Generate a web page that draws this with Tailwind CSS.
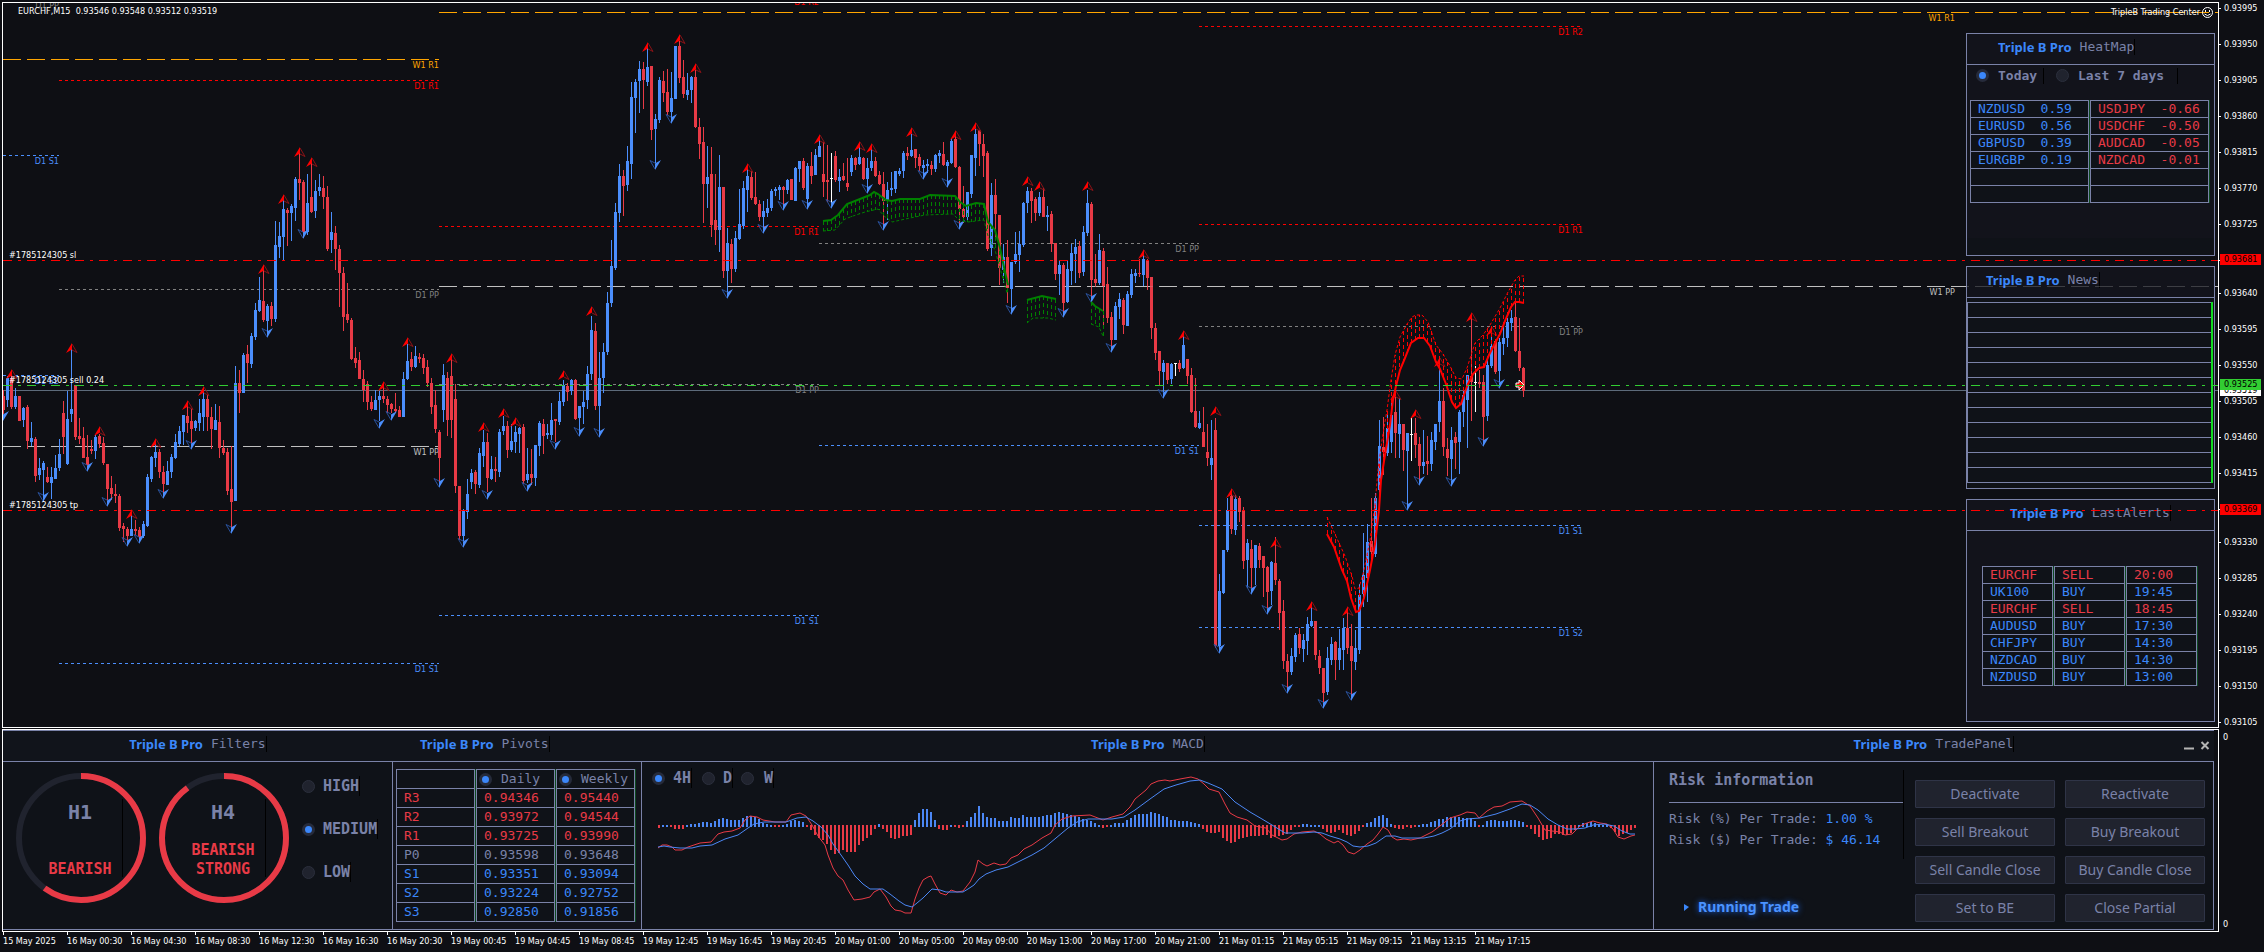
<!DOCTYPE html>
<html lang="en">
<head>
    <meta charset="UTF-8">
    <meta name="viewport" content="width=device-width, initial-scale=1.0">
    <title>EURCHF,M15 | Triple B Pro</title>
    <script src="https://cdn.jsdelivr.net/npm/@tailwindcss/browser@4"></script>
</head>
<body class="bg-[#0e0f14] min-h-screen flex flex-col overflow-x-hidden text-white font-['DejaVu_Sans_Condensed','DejaVu_Sans',sans-serif]">

    <!-- Price chart -->
    <div class="flex flex-1 pt-[2px] pl-[2px]">
        <main class="relative flex-1 min-h-[726px] border border-white overflow-hidden">
            <svg class="absolute inset-0 w-full h-full text-[9px]">
                <g transform="translate(-3 -3)">
                    <g id="pivot-lines" shape-rendering="crispEdges"></g>
                    <path d="M3 390.5H2218" stroke="#5d6b7b" shape-rendering="crispEdges"/>
                    <g id="candles" shape-rendering="crispEdges"></g>
                    <g id="arrows"></g>
                    <g id="ribbons"></g>
                    <path d="M1516 383h3v-3l5 5-5 5v-3h-3z" fill="#f00" stroke="#fff"/>
                    <g fill="#fff">
                        <text x="18" y="14" xml:space="preserve">EURCHF,M15  0.93546 0.93548 0.93512 0.93519</text>
                        <text x="9" y="258">#1785124305 sl</text>
                        <text x="9" y="383">#1785124305 sell 0.24</text>
                        <text x="9" y="508">#1785124305 tp</text>
                        <text x="2200" y="15" text-anchor="end">TripleB Trading Center</text>
                    </g>
                    <g fill="none" stroke="#fff">
                        <circle cx="2207.500" cy="12.500" r="5"/>
                        <path d="M2205.500 10v2M2209.500 10v2M2204.500 14q3 3 6 0"/>
                    </g>
                </g>
            </svg>

            <aside class="absolute top-[30px] right-[3px] w-[249px] flex flex-col gap-[10px] font-['DejaVu_Sans_Mono',monospace] text-[13px] leading-4 text-[#7a82a8]">
                <!-- HeatMap -->
                <section class="h-[223px] border border-[#7a82a8] bg-[#0f1218]">
                    <h2 class="h-[31px] pl-[31px] pb-1 flex items-center gap-2 border-b border-[#7a82a8] bg-[#12131b]">
                        <span class="font-['Noto_Sans',sans-serif] font-bold text-[#3b87fa]">Triple B Pro</span>
                        <span class="border-r border-black">HeatMap</span>
                    </h2>
                    <div class="h-[173px] bg-[#12131b]">
                        <div class="flex items-center h-[21px] pl-[9px] font-bold">
                            <input type="radio" name="range" id="today" checked class="appearance-none w-[13px] h-[13px] rounded-full bg-[#20232e] border border-[#2b2f3d] checked:bg-[#3b87fa] checked:border-[3px] checked:border-[#262b3b]">
                            <label for="today" class="w-[46px] ml-[9px] border-r border-black">Today</label>
                            <input type="radio" name="range" id="week" class="appearance-none ml-[12px] w-[13px] h-[13px] rounded-full bg-[#20232e] border border-[#2b2f3d] checked:bg-[#3b87fa] checked:border-[3px] checked:border-[#262b3b]">
                            <label for="week" class="w-[100px] ml-[9px] border-r border-black">Last 7 days</label>
                        </div>
                        <table id="heatmap" class="ml-[2px] mt-[14px] border-separate border-spacing-x-px border-spacing-y-0"></table>
                    </div>
                </section>
                <!-- News -->
                <section class="h-[223px] border border-[#7a82a8] bg-[#0f1218]">
                    <h2 class="h-[31px] pl-[19px] pb-1 flex items-center gap-2 border-b border-[#7a82a8] bg-[#12131b]">
                        <span class="font-['Noto_Sans',sans-serif] font-bold text-[#3b87fa]">Triple B Pro</span>
                        <span class="border-r border-black">News</span>
                    </h2>
                    <table id="news" class="mt-1 w-[246px] border-collapse border border-[#7a82a8] border-r-2 border-r-[#12d922]"></table>
                </section>
                <!-- LastAlerts -->
                <section class="h-[223px] border border-[#7a82a8] bg-[#12131b]">
                    <h2 class="h-[31px] pb-1 flex items-center justify-center gap-2 border-b border-[#7a82a8]">
                        <span class="font-['Noto_Sans',sans-serif] font-bold text-[#3b87fa]">Triple B Pro</span>
                        <span class="border-r border-black">LastAlerts</span>
                    </h2>
                    <table id="alerts" class="ml-[14px] mt-[35px] border-separate border-spacing-x-px border-spacing-y-0"></table>
                </section>
            </aside>

            <!-- Order levels stay above the panels -->
            <svg class="absolute inset-0 w-full h-full pointer-events-none" shape-rendering="crispEdges">
                <g transform="translate(-3 -3)" stroke-dasharray="9 6 3 6">
                    <path d="M3 260.500H2218" stroke="#f00"/>
                    <path d="M3 385.500H2218" stroke="#32cd32"/>
                    <path d="M3 510.500H2218" stroke="#f00"/>
                    <path d="M439 286.500H2218" stroke="#c0c0c0" stroke-opacity="0.250" stroke-dasharray="18 6"/>
                </g>
            </svg>
        </main>
        <!-- Price scale -->
        <div class="relative w-[45px] text-[9px] leading-3">
            <div id="prices" class="flex flex-col"></div>
            <span class="absolute top-[383px] left-px w-[41px] h-[11px] pl-1 leading-[11px] bg-white text-black">0.93519</span>
            <span class="absolute top-[377px] left-px w-[41px] h-[11px] pl-1 leading-[11px] bg-[#32cd32] text-black">0.93525</span>
            <span class="absolute top-[252px] left-px w-[41px] h-[11px] pl-1 leading-[11px] bg-[#f00] text-black">0.93681</span>
            <span class="absolute top-[502px] left-px w-[41px] h-[11px] pl-1 leading-[11px] bg-[#f00] text-black">0.93369</span>
        </div>
    </div>

    <!-- Dashboard -->
    <div class="flex pt-px pl-[2px]">
        <div class="flex-1 border border-white pr-1 pb-px">
            <div class="grid grid-cols-[390px_249px_1fr_560px] border-y border-[#7a82a8] bg-[#0f1218] font-['DejaVu_Sans_Mono',monospace] text-[13px] leading-4 text-[#7a82a8]">
                <!-- Filters -->
                <section class="flex flex-col">
                    <h2 class="h-[31px] pb-1 flex items-center justify-center gap-2 border-b border-[#7a82a8] bg-[#11141b]">
                        <span class="font-['Noto_Sans',sans-serif] font-bold text-[#3b87fa]">Triple B Pro</span>
                        <span class="border-r border-black">Filters</span>
                    </h2>
                    <div class="h-[167px] flex border-r border-[#7a82a8] pl-3 pt-[10px] font-bold">
                        <svg class="w-[276px] h-[132px]" text-anchor="middle">
                            <g fill="none" stroke-width="6">
                                <circle cx="66" cy="66" r="62" stroke="#20232e"/>
                                <circle cx="66" cy="66" r="62" stroke="#e83a46" pathLength="100" stroke-dasharray="60 40" transform="rotate(-90 66 66)"/>
                                <circle cx="209" cy="66" r="62" stroke="#20232e"/>
                                <circle cx="209" cy="66" r="62" stroke="#e83a46" pathLength="100" stroke-dasharray="90 10" transform="rotate(-90 209 66)"/>
                            </g>
                            <path d="M107.500 27v78M250.500 27v78" stroke="#000"/>
                            <g class="text-[20px]" fill="#7a82a8">
                                <text x="65" y="47">H1</text>
                                <text x="208" y="47">H4</text>
                            </g>
                            <g class="text-[15px]" fill="#e83a46">
                                <text x="65" y="102">BEARISH</text>
                                <text x="208" y="83">BEARISH</text>
                                <text x="208" y="102">STRONG</text>
                            </g>
                        </svg>
                        <div class="flex flex-col gap-[23px] pt-1 pl-[11px] text-[15px] leading-5">
                            <div class="flex items-center gap-2">
                                <input type="radio" name="filter" id="high" class="appearance-none w-[13px] h-[13px] rounded-full bg-[#20232e] border border-[#2b2f3d] checked:bg-[#3b87fa] checked:border-[3px] checked:border-[#262b3b]">
                                <label for="high" class="border-r border-black">HIGH</label>
                            </div>
                            <div class="flex items-center gap-2">
                                <input type="radio" name="filter" id="medium" checked class="appearance-none w-[13px] h-[13px] rounded-full bg-[#20232e] border border-[#2b2f3d] checked:bg-[#3b87fa] checked:border-[3px] checked:border-[#262b3b]">
                                <label for="medium" class="border-r border-black">MEDIUM</label>
                            </div>
                            <div class="flex items-center gap-2">
                                <input type="radio" name="filter" id="low" class="appearance-none w-[13px] h-[13px] rounded-full bg-[#20232e] border border-[#2b2f3d] checked:bg-[#3b87fa] checked:border-[3px] checked:border-[#262b3b]">
                                <label for="low" class="border-r border-black">LOW</label>
                            </div>
                        </div>
                    </div>
                </section>
                <!-- Pivots -->
                <section class="flex flex-col">
                    <h2 class="h-[31px] pl-[27px] pb-1 flex items-center gap-2 border-b border-[#7a82a8] bg-[#11141b]">
                        <span class="font-['Noto_Sans',sans-serif] font-bold text-[#3b87fa]">Triple B Pro</span>
                        <span class="border-r border-black">Pivots</span>
                    </h2>
                    <div class="flex-1 border-r border-[#7a82a8] pl-[2px] pt-[7px] bg-[#12131b]">
                        <table id="pivots" class="border-separate border-spacing-x-px border-spacing-y-0"></table>
                    </div>
                </section>
                <!-- MACD -->
                <section class="flex flex-col">
                    <h2 class="h-[31px] pb-1 flex items-center justify-center gap-2 border-b border-[#7a82a8] bg-[#11141b]">
                        <span class="font-['Noto_Sans',sans-serif] font-bold text-[#3b87fa]">Triple B Pro</span>
                        <span class="border-r border-black">MACD</span>
                    </h2>
                    <div class="relative flex-1 border-r border-[#7a82a8] overflow-hidden">
                        <svg class="absolute inset-0 w-full h-full">
                            <g transform="translate(-642 -762)">
                                <g id="macd-bars" shape-rendering="crispEdges"></g>
                                <polyline fill="none" stroke="#e83a46" points="658,848 662,845 667,845 672,847 675,850 682,850 688,847 694,845 700,843 711,842 718,834 724,832 732,831 740,828 745,820 750,816 757,817 763,820 775,822 786,822 791,815 800,813 806,816 812,825 818,836 825,845 828,855 833,868 838,876 843,880 848,890 854,900 862,899 870,897 874,892 880,889 886,897 891,906 895,910 901,911 905,913 911,913 915,899 919,888 923,880 928,877 931,876 935,884 940,893 946,895 951,890 957,892 963,891 970,882 975,872 978,860 983,864 987,866 994,863 1000,865 1006,864 1011,858 1018,855 1024,849 1032,845 1042,838 1051,833 1055,825 1062,819 1072,816 1090,815 1103,820 1112,817 1123,814 1130,807 1135,799 1146,790 1151,784 1158,781 1165,780 1170,781 1180,779 1191,777 1198,779 1204,784 1209,789 1219,792 1225,804 1230,813 1237,817 1247,820 1255,826 1266,828 1272,835 1282,840 1287,839 1294,834 1302,832 1314,831 1320,834 1326,839 1334,843 1338,841 1343,845 1348,852 1354,854 1360,850 1367,844 1373,840 1378,834 1383,827 1388,830 1392,837 1397,840 1404,839 1411,840 1420,838 1432,832 1440,826 1450,818 1460,815 1467,812 1475,813 1479,818 1487,811 1494,807 1502,806 1510,802 1522,801 1530,806 1538,818 1545,830 1552,831 1560,832 1565,835 1572,834 1580,826 1587,823 1593,821 1600,823 1607,824 1613,829 1618,837 1624,839 1631,836 1635,835"/>
                                <polyline fill="none" stroke="#4b87f5" points="658,847 664,846 670,847 680,848 692,848 700,846 712,845 725,839 738,835 748,828 754,824 764,822 786,822 797,818 806,817 813,821 821,827 828,835 833,844 841,855 848,865 855,876 863,884 870,889 883,889 890,894 899,901 905,905 912,907 917,903 923,898 932,889 940,890 946,892 963,892 968,889 974,885 979,879 986,874 996,870 1008,867 1020,861 1032,855 1044,848 1056,838 1068,828 1077,822 1088,819 1112,819 1124,817 1135,810 1150,799 1164,789 1176,785 1190,781 1200,780 1208,783 1222,789 1235,802 1250,812 1262,819 1272,825 1285,833 1302,833 1314,832 1322,833 1330,836 1340,839 1347,842 1353,846 1360,847 1368,846 1376,843 1386,836 1395,836 1402,838 1424,838 1434,836 1442,833 1450,829 1460,821 1467,819 1480,818 1496,814 1510,809 1522,804 1530,805 1538,810 1548,819 1558,825 1567,829 1575,829 1585,828 1593,825 1604,824 1614,826 1622,831 1630,834 1635,834"/>
                            </g>
                        </svg>
                        <div class="relative flex items-center h-5 mt-[6px] ml-[10px] text-[15px] leading-5 font-bold">
                            <input type="radio" name="macd" id="tf-4h" checked class="appearance-none w-[13px] h-[13px] rounded-full bg-[#20232e] border border-[#2b2f3d] checked:bg-[#3b87fa] checked:border-[3px] checked:border-[#262b3b]">
                            <label for="tf-4h" class="ml-2 border-r border-black">4H</label>
                            <input type="radio" name="macd" id="tf-d" class="appearance-none ml-[10px] w-[13px] h-[13px] rounded-full bg-[#20232e] border border-[#2b2f3d] checked:bg-[#3b87fa] checked:border-[3px] checked:border-[#262b3b]">
                            <label for="tf-d" class="ml-2 border-r border-black">D</label>
                            <input type="radio" name="macd" id="tf-w" class="appearance-none ml-2 w-[13px] h-[13px] rounded-full bg-[#20232e] border border-[#2b2f3d] checked:bg-[#3b87fa] checked:border-[3px] checked:border-[#262b3b]">
                            <label for="tf-w" class="ml-[10px] border-r border-black">W</label>
                        </div>
                    </div>
                </section>
                <!-- TradePanel -->
                <section class="flex flex-col">
                    <div class="relative h-[31px] border-b border-[#7a82a8] bg-[#11141b]">
                        <h2 class="h-[30px] pb-1 flex items-center justify-center gap-2">
                            <span class="font-['Noto_Sans',sans-serif] font-bold text-[#3b87fa]">Triple B Pro</span>
                            <span class="border-r border-black">TradePanel</span>
                        </h2>
                        <div class="absolute top-[9px] right-1 flex gap-[6px]">
                            <button aria-label="Minimize"><svg class="w-[10px] h-[12px]"><path d="M0 8.500h10" stroke="#b4b4b4" stroke-width="2"/></svg></button>
                            <button aria-label="Close"><svg class="w-[10px] h-[12px]"><path d="M1.500 2l7 7M8.500 2l-7 7" stroke="#b4b4b4" stroke-width="2"/></svg></button>
                        </div>
                    </div>
                    <div class="flex-1 flex border-r border-[#7a82a8] pl-[15px] pr-2">
                        <div class="flex flex-col w-[246px] pt-2 pb-[8px]">
                            <div class="h-[89px] w-[235px] border-r border-black">
                                <h3 class="h-[33px] text-[15px] leading-5 font-bold border-b border-[#7a82a8]">Risk information</h3>
                                <p class="mt-2">Risk (%) Per Trade: <span class="text-[#3b87fa]">1.00 %</span></p>
                                <p class="mt-[5px]">Risk ($) Per Trade: <span class="text-[#3b87fa]">$ 46.14</span></p>
                            </div>
                            <button class="mt-auto mb-1 ml-[15px] flex items-center gap-[9px] font-['Noto_Sans',sans-serif] font-bold text-[14px] leading-5 text-[#4b93ff] [text-shadow:0_0_6px_#1c6dff]">
                                <svg class="w-[5px] h-[7px]"><path d="M0 0l5 3-5 4z" fill="#3b87fa"/></svg>Running Trade
                            </button>
                        </div>
                        <div id="actions" class="grid grid-cols-2 gap-[10px] flex-1 content-start pt-[18px] font-['Noto_Sans',sans-serif] text-[14px]"></div>
                    </div>
                </section>
            </div>
        </div>
        <div class="w-[45px] flex flex-col justify-between pl-1 py-[2px] text-[9px] leading-3">
            <span>0</span>
            <span>0</span>
        </div>
    </div>

    <!-- Time scale -->
    <div id="times" class="flex h-5 pl-[3px] text-[9px] leading-[17px] overflow-hidden"></div>

    <script>
        const BLUE = "#4b8efc", RED = "#e83a46";
        const $ = id => document.getElementById(id);

        // Pivot levels: x1, x2, y, label, color
        const levels = [
            [3, 439, 59, "W1 R1", "#ffa500"], [439, 2218, 12, "", "#ffa500"],
            [3, 439, 446, "W1 PP", "#c0c0c0"], [439, 2218, 286, "", "#c0c0c0"],
            [59, 439, 80, "D1 R1", "#f00"], [439, 819, 226, "D1 R1", "#f00"], [439, 819, -4, "D1 R2", "#f00"],
            [59, 439, 289, "D1 PP", "#808080"], [439, 819, 384, "D1 PP", "#808080"], [819, 1199, 243, "D1 PP", "#808080"], [3, 59, -1, "D1 PP", "#808080"],
            [3, 59, 155, "D1 S1", BLUE], [3, 59, 375, "D1 S2", BLUE], [59, 439, 663, "D1 S1", BLUE], [439, 819, 615, "D1 S1", BLUE], [819, 1199, 445, "D1 S1", BLUE],
            [1199, 1583, 26, "D1 R2", "#f00"], [1199, 1583, 224, "D1 R1", "#f00"], [1199, 1583, 326, "D1 PP", "#808080"],
            [1199, 1583, 525, "D1 S1", BLUE], [1199, 1583, 627, "D1 S2", BLUE]
        ];
        $("pivot-lines").innerHTML = levels.map(([x1, x2, y, label, color]) => {
            const weekly = color === "#ffa500" || color === "#c0c0c0";
            return `<path d="M${x1} ${y}.5H${x2}" stroke="${color}" stroke-dasharray="${weekly ? "18 6" : "3 3"}"/>
                <text x="${x2}" y="${y + 9}" text-anchor="end" fill="${color}">${label}</text>`;
        }).join("") +
            `<text x="1955" y="21" text-anchor="end" fill="#ffa500">W1 R1</text>
             <text x="1955" y="295" text-anchor="end" fill="#c0c0c0">W1 PP</text>`;

        // Candles: direction, high, body top, body bottom, low
        const candles = `r390 396 410 414,b376 378 400 407,r374 378 407 409,b388 396 407 409,r396 396 421 421,b407 408 420 427,r405 407 441 449,b422 438 442 446,r437 439 476 482,b458 468 475 480,
b461 463 470 502,r467 477 482 483,b467 477 483 499,b455 468 479 479,b439 454 468 471,r401 413 437 454,b391 419 464 465,b349 409 414 422,r385 385 437 440,r418 436 439 444,
r427 438 458 458,r435 457 465 465,r440 449 451 454,b435 437 451 459,r434 436 444 448,r437 443 463 465,r464 464 489 500,r476 488 494 500,r484 494 496 503,r494 496 528 531,
r523 526 529 542,r527 529 536 540,b515 529 536 536,r520 529 531 535,r527 530 537 540,b521 524 536 538,b474 477 526 527,b456 457 479 482,b444 452 458 467,r449 452 472 478,
r466 472 484 495,b461 471 485 485,b454 457 472 478,b434 442 458 459,b426 431 444 446,b415 415 432 445,r406 416 423 433,r409 421 429 443,b420 421 428 431,b399 413 423 431,
b391 399 417 431,r395 399 417 431,r407 417 429 449,b404 420 430 430,r406 422 448 458,r440 448 453 455,r448 452 491 495,r446 489 502 528,b366 383 501 501,r370 383 393 413,
b353 355 393 393,r345 354 363 383,b333 336 364 368,b303 310 337 340,b277 300 311 312,r269 301 320 322,b304 306 321 336,r302 306 319 326,b221 245 319 322,b222 236 247 258,
b200 209 237 260,r208 210 213 246,b204 206 213 241,b177 179 208 221,r153 179 183 200,r180 182 232 238,b174 203 232 235,r162 197 212 213,b180 191 211 218,b174 187 191 196,
r176 188 197 209,r186 197 249 251,b212 232 240 253,r226 233 249 270,r245 249 273 307,r267 273 317 331,r283 314 320 323,r318 320 359 360,r347 358 363 368,r352 360 379 379,
r370 379 390 402,r381 384 402 410,r396 402 409 411,b390 400 410 410,b391 396 400 421,r387 396 399 403,r396 399 405 413,r403 404 409 413,r393 409 411 413,r406 410 417 417,
b372 379 417 417,b344 361 379 380,r352 359 367 371,b346 356 367 368,r353 357 359 363,r354 358 368 374,r360 367 383 387,r378 383 407 414,r390 405 429 433,r430 432 458 484,
b364 375 410 422,r372 378 420 436,r359 376 420 438,r384 399 486 493,r486 486 536 540,b509 510 536 541,b479 494 512 519,b469 473 482 489,r470 472 484 494,b448 453 485 488,
b430 442 456 467,r433 442 478 492,b456 469 479 480,r457 469 471 482,b429 432 472 477,b416 426 431 435,r421 426 450 458,b424 441 450 452,b426 432 442 453,b427 428 434 453,
r424 427 481 484,b448 474 480 483,r449 474 478 485,b445 445 478 486,b421 423 446 456,r419 424 436 454,b424 433 435 439,b403 420 435 440,r419 419 421 442,b392 401 422 425,
b380 385 402 406,r383 386 392 401,b379 380 391 395,r379 380 419 420,b406 406 418 431,b391 402 407 424,b366 374 400 409,b316 330 374 380,r323 331 406 410,b352 378 406 436,
b343 352 378 393,b292 303 352 355,b240 266 303 307,b203 212 268 270,b164 176 213 222,r170 176 186 216,b146 161 185 191,b82 97 164 179,b79 82 98 133,b61 69 81 113,
r62 69 80 109,b48 67 82 86,r66 66 130 140,b114 119 129 163,b77 80 120 123,r71 81 93 102,r69 92 112 115,b72 98 112 118,b46 46 99 99,r41 46 78 83,
r60 77 94 98,b73 90 95 100,b76 77 90 103,r70 77 127 128,r118 127 144 159,r127 142 184 223,b146 177 184 208,r147 174 225 237,r174 220 230 245,b155 187 230 252,
r187 187 271 278,b228 243 271 292,r239 244 269 283,b231 238 269 272,b189 224 239 240,b181 188 226 229,b168 176 190 212,r171 177 198 200,r172 197 204 205,r200 204 217 221,
b201 211 217 228,b199 208 213 217,b189 191 208 211,b187 189 191 196,b185 187 190 200,r186 187 190 205,b179 180 190 194,r179 179 200 200,b167 168 201 201,b161 161 169 182,
r158 161 188 190,b163 166 199 204,r152 166 176 184,b149 155 175 175,b140 146 157 157,r142 174 182 197,r145 180 182 202,w153 178 179 204,r151 156 180 182,b169 177 181 192,
r163 176 180 181,r158 183 187 191,b155 158 172 176,r157 158 165 170,b147 157 164 165,r157 158 179 180,b158 168 179 191,b149 161 168 171,r157 161 176 177,r171 175 184 185,
r172 184 201 225,b182 190 201 220,b172 188 190 196,b171 171 189 193,b168 171 174 176,b151 153 171 178,r147 153 156 160,b134 150 156 157,r149 149 158 168,r154 157 166 171,
b160 165 168 174,b159 164 166 173,r161 165 169 175,b154 155 169 172,b150 153 156 163,r142 154 165 166,b160 162 166 187,b138 141 163 164,r136 139 167 168,r166 167 209 224,
r186 209 217 223,b192 192 217 220,b155 155 194 198,b129 134 158 176,r130 130 144 166,r134 144 156 177,r151 153 249 251,b183 195 248 256,r179 195 214 240,r215 215 268 285,
b244 257 270 283,r240 257 288 303,b262 262 289 311,b232 254 262 264,b231 244 255 272,b202 203 245 247,b187 191 203 213,r188 191 201 223,r197 199 213 221,b192 197 213 216,
r188 197 217 217,b206 215 217 231,r211 214 244 252,r243 243 274 280,b261 265 274 295,r263 265 303 313,b260 269 302 303,b244 253 271 285,b239 247 254 283,r241 246 273 278,
b226 232 272 276,b190 203 233 236,r202 204 280 300,r254 279 283 287,b234 250 283 285,r248 251 286 326,r267 284 318 323,r312 317 340 348,b302 306 340 340,b293 299 307 319,
r298 300 325 334,b291 294 326 326,b269 274 295 298,b269 273 276 283,r259 273 274 277,b254 259 275 286,r259 260 278 290,r277 277 328 339,r323 328 353 360,r351 351 371 386,
b360 363 372 392,r363 363 380 384,b363 364 379 384,w363 363 364 376,r360 363 369 372,b336 345 368 369,r359 359 376 384,r368 375 412 413,r378 411 427 428,b411 423 428 429,
r407 432 447 447,r424 452 458 466,b420 458 465 480,r418 430 646 648,b574 591 646 650,b550 550 593 594,b498 510 550 552,r494 496 529 534,b495 499 530 535,r496 498 512 522,
r507 511 561 569,b539 543 560 588,r540 549 568 588,b545 545 568 585,r543 546 560 568,r556 556 568 597,r566 567 592 608,b561 562 591 605,r537 563 580 585,r579 581 613 630,
r600 611 661 669,r654 661 672 688,b648 656 672 675,b633 635 657 662,r628 634 648 654,b634 640 649 662,b617 624 641 655,b607 621 626 627,r621 621 655 660,r650 656 668 674,
r668 668 693 702,b647 658 692 695,b637 644 660 665,r641 642 660 680,b629 648 660 670,b618 628 650 670,r612 628 648 654,r624 646 661 695,b630 648 662 670,b584 595 650 654,
b533 575 594 607,b524 542 578 602,r498 541 552 560,b493 498 554 557,b420 446 490 498,r417 447 452 475,b413 428 453 456,b402 415 442 453,r397 412 433 458,b398 424 434 458,
r424 424 450 471,b433 433 451 507,w418 434 435 461,r418 433 445 458,r437 444 466 480,b430 462 466 474,r436 461 464 475,b432 440 464 471,b424 424 442 450,b361 401 422 432,
r388 401 447 456,r438 449 458 476,b427 440 459 480,r432 437 443 469,b410 412 442 474,b390 395 412 427,b375 375 400 448,r318 376 382 421,w366 382 383 412,r370 382 384 388,
r375 382 417 441,b359 365 416 421,b336 346 366 368,r340 341 372 374,b338 342 371 382,b322 338 344 355,b318 322 338 347,b310 318 323 331,r303 317 351 352,r318 351 368 371,
r367 368 391 397`.split(",");
        const candleColor = { r: RED, b: BLUE, w: "#fff" };
        $("candles").innerHTML = candles.map((c, i) => {
            c = c.trim();
            const [high, top, bottom, low] = c.slice(1).split(" ").map(Number);
            const x = 3 + i * 4;
            return `<path fill="${candleColor[c[0]]}" d="M${x} ${high}h1V${low}h-1zM${x - 1} ${top}h3V${bottom}h-3z"/>`;
        }).join("");

        // Fractal arrows: candle index, tip y
        const ups = [[17,343],[2,369],[65,264],[70,194],[74,147],[77,157],[101,337],[112,353],[140,370],[147,306],[161,42],[169,34],[173,63],[186,163],[24,426],[32,509],[38,438],[46,400],[50,386],[95,381],[120,422],[125,408],[128,417],[204,134],[214,141],[217,143],[227,127],[238,130],[243,122],[256,176],[259,181],[271,181],[285,249],[295,330],[303,406],[307,488],[318,538],[327,601],[336,606],[348,390],[353,409],[359,357],[367,312],[372,326]];
        const downs = [[0,421],[10,502],[21,472],[26,507],[31,547],[34,544],[40,499],[47,450],[57,534],[66,338],[75,239],[94,429],[97,421],[109,488],[115,548],[121,500],[131,492],[138,450],[144,437],[149,438],[163,170],[167,124],[181,299],[190,234],[195,211],[201,210],[207,209],[216,194],[220,231],[230,180],[236,188],[239,230],[252,315],[265,318],[272,303],[277,353],[290,399],[304,654],[312,595],[316,615],[321,694],[330,709],[337,701],[351,511],[354,486],[362,487],[370,447],[374,389]];
        $("arrows").innerHTML =
            ups.map(([i, y]) => `<g transform="translate(${3 + i * 4} ${y})"><path d="M1 1L6 9.500 1 7" fill="none" stroke="#8c1216"/><path d="M1 0v6.500L-5 10z" fill="#f00"/></g>`).join("") +
            downs.map(([i, y]) => `<g transform="translate(${3 + i * 4} ${y})"><path d="M0-1L-5-9.500 0-7" fill="none" stroke="#29509a"/><path d="M0 0v-6.500L6-10z" fill="${BLUE}"/></g>`).join("");

        // Ribbons: solid edge, dashed edge, color
        const ribbons = [
            ["823,221 831,220 838,215 847,204 860,199 870,195 874,192 878,194 886,200 892,201 900,199 920,199 930,195 955,196 960,202 966,206 976,203 984,204 988,222 995,230 1000,248 1005,272 1008,285",
             "823,231 835,230 845,219 853,216 865,212 878,209 884,216 892,222 910,218 925,215 953,214 960,221 968,222 984,220 988,236 995,250 1000,268 1007,293", "#008000"],
            ["1027,300 1042,296 1056,299", "1027,323 1033,318 1048,318 1056,320", "#008000"],
            ["1091,302 1095,306 1103,311", "1091,324 1099,327 1103,336", "#008000"],
            ["1327,534 1334,547 1342,570 1347,581 1351,598 1356,612 1359,611 1364,598 1370,570 1375,544 1379,510 1381,480 1385,455 1390,425 1393,400 1396,386 1400,370 1405,358 1411,343 1418,338 1424,338 1430,346 1436,362 1440,369 1446,384 1452,402 1456,408 1461,404 1465,392 1468,384 1473,374 1479,368 1484,367 1489,355 1494,345 1500,334 1505,321 1511,307 1515,302 1519,302 1524,303",
             "1327,517 1334,532 1345,556 1352,576 1355,589 1359,588 1364,570 1370,540 1375,505 1378,470 1382,440 1387,410 1391,380 1395,355 1400,337 1407,324 1412,317 1416,315 1422,315 1428,322 1436,345 1443,354 1450,366 1456,378 1462,379 1467,368 1475,343 1483,335 1490,325 1500,308 1508,292 1515,280 1519,276 1524,276", "#f00"]
        ];
        const parse = s => s.split(" ").map(p => p.split(",").map(Number));
        function yAt(points, x) {
            for (let i = 1; i < points.length; i++) {
                const [x0, y0] = points[i - 1], [x1, y1] = points[i];
                if (x <= x1) return Math.round(y0 + (y1 - y0) * (x - x0) / (x1 - x0));
            }
            return points[points.length - 1][1];
        }
        $("ribbons").innerHTML = ribbons.map(([solid, dashed, color]) => {
            const a = parse(solid), b = parse(dashed);
            let bars = "";
            for (let x = a[0][0]; x <= a[a.length - 1][0]; x += 4) bars += `M${x}.5 ${yAt(a, x)}V${yAt(b, x)}`;
            return `<g fill="none" stroke="${color}"><path d="${bars}" stroke-dasharray="4 3" shape-rendering="crispEdges"/>
                <polyline points="${dashed}" stroke-dasharray="3 2"/><polyline points="${solid}" stroke-width="2"/></g>`;
        }).join("");

        // MACD histogram
        const macd = [-2,1,1,-1,-3,-3,-3,1,2,2,3,4,4,3,5,7,8,7,6,6,6,8,10,10,9,7,3,2,1,-1,-1,1,2,5,6,5,4,-1,-4,-9,-12,-14,-18,-24,-28,-27,-24,-26,-26,-26,-19,-15,-12,-9,-3,2,-3,-6,-12,-13,-12,-10,-10,-9,6,13,17,17,14,6,-3,-4,-4,1,-1,-2,-1,5,9,13,20,13,9,8,8,5,5,5,9,8,8,11,9,9,9,9,10,11,11,13,14,13,12,11,10,9,7,6,5,3,1,-2,-1,1,3,3,3,6,8,11,12,12,12,14,13,12,10,9,6,6,5,5,5,4,3,2,-3,-6,-7,-7,-6,-12,-15,-17,-16,-13,-12,-11,-10,-10,-10,-9,-9,-12,-11,-10,-9,-8,-4,-1,-1,2,2,1,1,1,-3,-6,-7,-6,-4,-7,-9,-10,-8,-5,-1,3,4,8,10,11,8,2,-2,-3,-3,-1,-2,-1,1,2,2,4,5,7,7,9,9,9,9,8,8,8,5,-1,1,5,6,6,5,5,5,6,6,5,4,-1,-3,-8,-11,-14,-13,-12,-8,-8,-9,-9,-7,-4,1,3,3,4,3,2,1,1,-2,-6,-10,-8,-7,-4,-2];
        $("macd-bars").innerHTML = macd.map((v, i) =>
            `<rect x="${658 + i * 4}" y="${v > 0 ? 826 - v : 825}" width="2" height="${Math.abs(v) + 1}" fill="${v > 0 ? "#4b87f5" : RED}"/>`).join("");

        // Tables
        const tone = { r: "text-[#e83a46]", b: "text-[#3b87fa]", g: "text-[#7a82a8]" };
        const heat = [["NZDUSD  0.59", "USDJPY  -0.66"], ["EURUSD  0.56", "USDCHF  -0.50"], ["GBPUSD  0.39", "AUDCAD  -0.05"], ["EURGBP  0.19", "NZDCAD  -0.01"], ["", ""], ["", ""]];
        $("heatmap").innerHTML = heat.map(([up, down], i) => `
            <tr>
                <td class="${i ? "" : "border-t"} w-[119px] h-[17px] p-0 pl-[7px] border-x border-b border-[#7a82a8] bg-[#0f1218] whitespace-pre shadow-[1px_0_0_#0d4a20] text-[#3b87fa]">${up}</td>
                <td class="${i ? "" : "border-t"} w-[119px] h-[17px] p-0 pl-[7px] border-x border-b border-[#7a82a8] bg-[#0f1218] whitespace-pre shadow-[1px_0_0_#0d4a20] text-[#e83a46]">${down}</td>
            </tr>`).join("");

        $("news").innerHTML = Array(12).fill(`<tr><td class="h-[15px] p-0 border-b border-[#7a82a8]"></td></tr>`).join("");

        const alerts = [["r", "EURCHF", "SELL", "20:00"], ["b", "UK100", "BUY", "19:45"], ["r", "EURCHF", "SELL", "18:45"], ["b", "AUDUSD", "BUY", "17:30"], ["b", "CHFJPY", "BUY", "14:30"], ["b", "NZDCAD", "BUY", "14:30"], ["b", "NZDUSD", "BUY", "13:00"]];
        $("alerts").innerHTML = alerts.map(([c, ...cells], i) => `<tr class="${tone[c]}">` + cells.map(cell =>
            `<td class="${i ? "" : "border-t"} w-[71px] h-[17px] p-0 pl-[7px] border-x border-b border-[#7a82a8] bg-[#0f1218] shadow-[1px_0_0_#0d4a20]">${cell}</td>`).join("") + "</tr>").join("");

        const pivotHead = name => `
            <th class="w-[79px] h-[20px] p-0 pl-[2px] border border-[#7a82a8] bg-[#0f1218] font-normal shadow-[1px_0_0_#0d4a20]">
                <div class="flex items-center gap-[9px]">
                    <input type="radio" name="${name}" id="${name}" checked class="appearance-none w-[13px] h-[13px] rounded-full bg-[#20232e] border border-[#2b2f3d] checked:bg-[#3b87fa] checked:border-[3px] checked:border-[#262b3b]">
                    <label for="${name}">${name}</label>
                </div>
            </th>`;
        const pivots = [["r", "R3", "0.94346", "0.95440"], ["r", "R2", "0.93972", "0.94544"], ["r", "R1", "0.93725", "0.93990"], ["g", "P0", "0.93598", "0.93648"], ["b", "S1", "0.93351", "0.93094"], ["b", "S2", "0.93224", "0.92752"], ["b", "S3", "0.92850", "0.91856"]];
        $("pivots").innerHTML = `<tr><td class="w-[79px] h-[20px] p-0 border border-[#7a82a8] bg-[#0f1218] shadow-[1px_0_0_#0d4a20]"></td>${pivotHead("Daily")}${pivotHead("Weekly")}</tr>` +
            pivots.map(([c, ...cells]) => `<tr class="${tone[c]}">` + cells.map(cell =>
                `<td class="w-[79px] h-[19px] p-0 pl-[7px] border-x border-b border-[#7a82a8] bg-[#0f1218] shadow-[1px_0_0_#0d4a20]">${cell}</td>`).join("") + "</tr>").join("");

        const actions = ["Deactivate", "Reactivate", "Sell Breakout", "Buy Breakout", "Sell Candle Close", "Buy Candle Close", "Set to BE", "Close Partial"];
        $("actions").innerHTML = actions.map(a => `<button class="h-7 rounded-[1px] border border-[#2f3447] bg-[#20232e]">${a}</button>`).join("");

        // Scales
        const prices = ["0.93995", "0.93950", "0.93905", "0.93860", "0.93815", "0.93770", "0.93725", "0.93680", "0.93640", "0.93595", "0.93550", "0.93505", "0.93460", "0.93415", "0.93370", "0.93330", "0.93285", "0.93240", "0.93195", "0.93150", "0.93105"];
        $("prices").innerHTML = prices.map(p => {
            const height = p === "0.93680" || p === "0.93370" ? "h-[33px]" : p === "0.93105" ? "h-3" : "h-9";
            return `<div class="${height} flex"><i class="w-[2px] h-px mt-[6px] mr-[3px] bg-white"></i>${p}</div>`;
        }).join("");

        const times = ["15 May 2025", "16 May 00:30", "16 May 04:30", "16 May 08:30", "16 May 12:30", "16 May 16:30", "16 May 20:30", "19 May 00:45", "19 May 04:45", "19 May 08:45", "19 May 12:45", "19 May 16:45", "19 May 20:45", "20 May 01:00", "20 May 05:00", "20 May 09:00", "20 May 13:00", "20 May 17:00", "20 May 21:00", "21 May 01:15", "21 May 05:15", "21 May 09:15", "21 May 13:15", "21 May 17:15"];
        $("times").innerHTML = times.map(t => `<div class="w-16 shrink-0 whitespace-nowrap"><i class="block w-px h-[3px] bg-white"></i><p class="-mt-[2px]">${t}</p></div>`).join("");
    </script>
</body>
</html>
